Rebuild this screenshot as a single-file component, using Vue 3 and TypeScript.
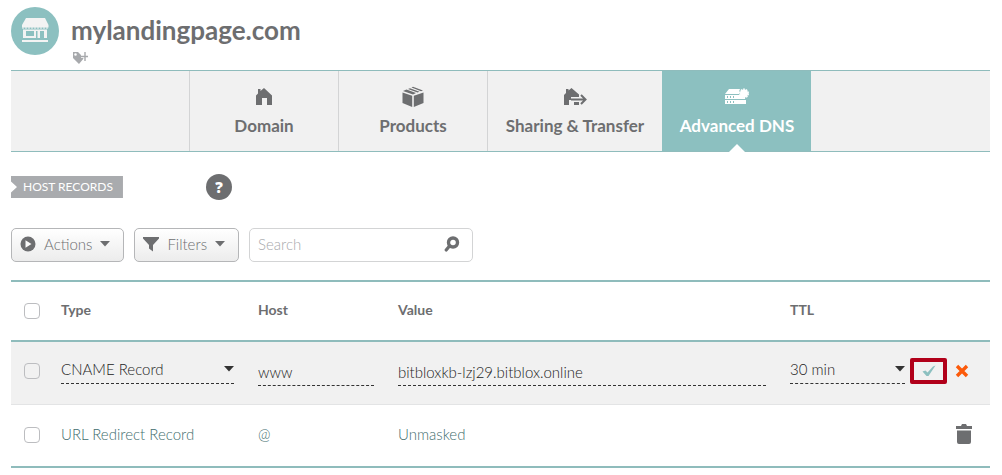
<script setup lang="ts">
import { ref } from 'vue'

interface Tab {
  id: string
  label: string
  wide?: boolean
}

const tabs: Tab[] = [
  { id: 'domain', label: 'Domain' },
  { id: 'products', label: 'Products' },
  { id: 'sharing', label: 'Sharing & Transfer', wide: true },
  { id: 'dns', label: 'Advanced DNS' },
]
const activeTab = ref('dns')
const search = ref('')
const recordType = ref('CNAME Record')
const host = ref('www')
const value = ref('bitbloxkb-lzj29.bitblox.online')
const ttl = ref('30 min')
</script>

<template>
  <main class="page">
    <header class="head">
      <svg class="logo" viewBox="0 0 48 48" aria-hidden="true">
        <circle cx="24" cy="24" r="24" fill="#8cc0c0" />
        <path d="M15 11h19l3.500 7v2.500H11V18z" fill="#f3f3f3" />
        <path d="M11 21h26.500" stroke="#f3f3f3" stroke-width="1" stroke-dasharray="2 1" />
        <path d="M12 22.500h24V31h-3v-7h-4v7h-2.500v-7H25v7H12zm3 1.500v5h8v-5z" fill="#f3f3f3" fill-rule="evenodd" />
        <path d="M11 33h26v2H11z" fill="#f3f3f3" />
      </svg>
      <div class="identity">
        <h1>mylandingpage.com</h1>
        <button class="tag" aria-label="Add tag">
          <svg width="17" height="13" viewBox="0 0 17 13">
            <path d="M2 0h5l6 6-5 6-6-6zM4.500 1.200a1.300 1.300 0 1 0 0 2.600 1.300 1.300 0 0 0 0-2.600z" fill="#a7a9ac" fill-rule="evenodd" />
            <path d="M14 0v9M10 4.500h7" stroke="#fff" stroke-width="3" />
            <path d="M14 0v9M10 4.500h7" stroke="#a7a9ac" stroke-width="1.400" />
          </svg>
        </button>
      </div>
    </header>

    <nav class="tabs">
      <a
        v-for="tab in tabs"
        :key="tab.id"
        href="#"
        class="tab"
        :class="{ active: tab.id === activeTab, wide: tab.wide }"
        @click.prevent="activeTab = tab.id"
      >
        <svg v-if="tab.id === 'domain'" width="24" height="22" viewBox="0 0 24 22">
          <path d="M4 9.500L6 7.500V3h2.500v2L12 2l8 7.500V19h-5v-7h-5v7H4z" fill="currentColor" />
        </svg>
        <svg v-else-if="tab.id === 'products'" width="24" height="22" viewBox="0 0 24 22">
          <path d="M1.500 6.500l9.700 3.300V21l-9.700-4zM22.500 6.500l-9.700 3.300V21l9.700-4zM2 5l3.500-1.400 9.500 3.400-3 1.400zM7 3l2-.8 9.500 3.500-2 .8zM10.500 1.400L12 .700 22 4.500l-2 .700z" fill="currentColor" />
        </svg>
        <svg v-else-if="tab.id === 'sharing'" width="24" height="22" viewBox="0 0 24 22">
          <path d="M1 9l2-2V3h2.500v1.500L8.500 2l7.500 6.500V11H8v3H6v5H1zM11 16h5v3h-5z" fill="currentColor" />
          <path d="M8 13.500h14M18 9l4.500 4.500L18 18" fill="none" stroke="currentColor" stroke-width="2" />
        </svg>
        <svg v-else width="24" height="22" viewBox="0 0 24 22">
          <path d="M4 3h11a5 5 0 0 0-.5 5H0zM0 9h15.500a5 5 0 0 0 4.500 2.500V13H0zM0 14h21v4H0z" fill="currentColor" />
          <circle cx="19" cy="7.500" r="4" fill="currentColor" />
          <circle cx="19" cy="7.500" r="4.300" fill="none" stroke="currentColor" stroke-width="1.400" stroke-dasharray="1.700 1" />
          <path d="M2 11h7M2 16h7" stroke="#8cc0c0" stroke-width="2" stroke-dasharray="1 2" />
        </svg>
        <span>{{ tab.label }}</span>
      </a>
    </nav>

    <div class="section">
      <h2>HOST RECORDS</h2>
      <button class="help" aria-label="Help">?</button>
    </div>

    <div class="toolbar">
      <button class="btn">
        <svg width="16" height="16" viewBox="0 0 16 16"><circle cx="8" cy="8" r="7.500" fill="#6d6e70" /><path d="M5.500 4.200v7.600l6-3.800z" fill="#fafafa" /></svg>
        <span>Actions</span>
        <svg width="10" height="6" viewBox="0 0 10 6"><path d="M0 0h10L5 5.500z" fill="#6d6e70" /></svg>
      </button>
      <button class="btn">
        <svg width="16" height="16" viewBox="0 0 16 16"><path d="M0 1h16v1.500L10 9v6.500L6 12.500V9L0 2.500z" fill="#6d6e70" /></svg>
        <span>Filters</span>
        <svg width="10" height="6" viewBox="0 0 10 6"><path d="M0 0h10L5 5.500z" fill="#6d6e70" /></svg>
      </button>
      <div class="search" role="search">
        <input v-model="search" type="text" placeholder="Search" aria-label="Search" />
        <button aria-label="Run search">
          <svg width="16" height="16" viewBox="0 0 16 16">
            <circle cx="9" cy="6.500" r="4.500" fill="none" stroke="#6d6e70" stroke-width="3.400" />
            <path d="M5.500 10L2.200 14" stroke="#6d6e70" stroke-width="3.200" stroke-linecap="round" />
          </svg>
        </button>
      </div>
    </div>

    <table>
      <colgroup>
        <col class="c-check" /><col class="c-type" /><col class="c-host" /><col /><col class="c-ttl" /><col class="c-act" />
      </colgroup>
      <thead>
        <tr>
          <th class="pick"><input type="checkbox" aria-label="Select all records" /></th>
          <th>Type</th>
          <th>Host</th>
          <th>Value</th>
          <th>TTL</th>
          <th></th>
        </tr>
      </thead>
      <tbody>
        <tr class="editing">
          <td class="pick"><input type="checkbox" aria-label="Select CNAME record" /></td>
          <td>
            <div class="field drop">
              <select v-model="recordType" aria-label="Type">
                <option>CNAME Record</option>
                <option>URL Redirect Record</option>
              </select>
              <svg width="10" height="6" viewBox="0 0 10 6"><path d="M0 0h10L5 5.500z" fill="#333" /></svg>
            </div>
          </td>
          <td><div class="field text"><input v-model="host" type="text" aria-label="Host" /></div></td>
          <td><div class="field text"><input v-model="value" type="text" aria-label="Value" /></div></td>
          <td class="ttl">
            <div class="field drop">
              <select v-model="ttl" aria-label="TTL">
                <option>30 min</option>
                <option>60 min</option>
              </select>
              <svg width="10" height="6" viewBox="0 0 10 6"><path d="M0 0h10L5 5.500z" fill="#333" /></svg>
            </div>
          </td>
          <td class="acts">
            <div class="act-row">
              <button class="save" aria-label="Save changes">
                <svg width="14" height="12" viewBox="0 0 14 12"><path d="M.500 6.500L3.500 5.500 5.500 7.500 11 1.500 13.500.500 6.500 11H4.500z" fill="#8cc0c0" /></svg>
              </button>
              <button aria-label="Discard changes">
                <svg width="14" height="14" viewBox="0 0 14 14"><path d="M2 2l10 10M12 2L2 12" stroke="#fc5a0a" stroke-width="3.400" /></svg>
              </button>
            </div>
          </td>
        </tr>
        <tr class="saved">
          <td class="pick"><input type="checkbox" aria-label="Select URL redirect record" /></td>
          <td>URL Redirect Record</td>
          <td>@</td>
          <td>Unmasked</td>
          <td></td>
          <td class="acts">
            <div class="act-row end">
              <button aria-label="Delete record">
                <svg width="16" height="20" viewBox="0 0 16 20"><path d="M0 2h5l1-2h4l1 2h5v3H0zM1 6.500h14V18q0 2-2 2H3q-2 0-2-2z" fill="#6d6e70" /></svg>
              </button>
            </div>
          </td>
        </tr>
      </tbody>
    </table>
  </main>
</template>

<style>
body {
  margin: 0;
  background: #fff;
}
</style>

<style scoped>
* {
  box-sizing: border-box;
}
.page {
  padding: 7px 12px 0 11px;
  font: 300 15px/20px Lato, "Open Sans", sans-serif;
  color: #6d6e70;
}
button,
input,
select {
  font: inherit;
  color: inherit;
  margin: 0;
  padding: 0;
  border: 0;
  background: none;
}
svg {
  display: block;
  flex: none;
}
.head {
  display: flex;
  gap: 12px;
  height: 63px;
}
.logo {
  width: 48px;
  height: 48px;
}
.identity {
  padding-top: 8px;
}
h1 {
  margin: 0;
  font-size: 26px;
  line-height: 30px;
  font-weight: 700;
}
.tag {
  display: block;
  margin-top: 7px;
}
.tabs {
  display: flex;
  height: 82px;
  padding-left: 178px;
  background: #f1f1f1;
  border-top: 1px solid #8fbcbc;
  border-bottom: 1px solid #8fbcbc;
}
.tab {
  position: relative;
  display: flex;
  flex-direction: column;
  align-items: center;
  gap: 8px;
  width: 149px;
  padding-top: 15px;
  border-left: 1px solid #d3d4d5;
  color: #6d6e70;
  font-size: 17px;
  font-weight: 700;
  text-decoration: none;
  white-space: nowrap;
}
.tab.wide {
  width: 175px;
}
.tab.active {
  background: #8cc0c0;
  border-color: #8cc0c0;
  color: #fff;
}
.tab.active::after {
  content: "";
  position: absolute;
  bottom: -1px;
  left: 50%;
  margin-left: -8px;
  border: 8px solid transparent;
  border-top: 0;
  border-bottom-color: #fff;
}
.section {
  display: flex;
  align-items: center;
  gap: 83px;
  margin-top: 22px;
}
h2 {
  margin: 0;
  padding: 0 10px 0 12px;
  background: #a9abae;
  clip-path: polygon(0 0, 100% 0, 100% 100%, 0 100%, 0 75%, 6px 50%, 0 25%);
  color: #fff;
  font-size: 12px;
  line-height: 22px;
  font-weight: 400;
}
.help {
  width: 26px;
  height: 26px;
  border-radius: 50%;
  background: #6d6e70;
  color: #fff;
  font: 800 15px/26px "Open Sans", sans-serif;
}
.toolbar {
  display: flex;
  gap: 10px;
  margin-top: 28px;
}
.btn {
  display: flex;
  align-items: center;
  gap: 8px;
  height: 34px;
  padding: 0 13px 2px 8px;
  border: 1px solid #b5b6b8;
  border-radius: 5px;
  background: linear-gradient(#fff, #ececec);
}
.search {
  display: flex;
  align-items: center;
  width: 224px;
  height: 34px;
  padding: 0 12px 2px 8px;
  border: 1px solid #d3d4d5;
  border-radius: 5px;
}
.search input {
  flex: 1;
  min-width: 0;
  outline: 0;
}
.search input::placeholder {
  color: #a7a9ac;
  opacity: 1;
}
table {
  width: 100%;
  margin-top: 18px;
  border-collapse: separate;
  border-spacing: 0;
  table-layout: fixed;
  border-top: 2px solid #8fbcbc;
  border-bottom: 2px solid #8fbcbc;
}
.c-check {
  width: 50px;
}
.c-type {
  width: 197px;
}
.c-host {
  width: 140px;
}
.c-ttl {
  width: 120px;
}
.c-act {
  width: 80px;
}
th,
td {
  padding: 0 24px 2px 0;
  text-align: left;
  vertical-align: middle;
}
th {
  height: 60px;
  border-bottom: 2px solid #8fbcbc;
  font-size: 14px;
  font-weight: 700;
}
td {
  height: 61px;
  padding-bottom: 4px;
  white-space: nowrap;
}
.editing td {
  height: 63px;
  background: #f1f1f1;
  border-bottom: 1px solid #e3e4e5;
  color: #222;
}
.saved {
  color: #3f6e6e;
}
.saved td:nth-child(2) {
  padding-right: 0;
}
th.pick,
td.pick {
  padding: 0 0 0 13px;
}
.editing td.pick {
  padding-bottom: 4px;
}
.saved td.pick {
  padding-bottom: 2px;
}
.pick input {
  display: block;
  appearance: none;
  width: 16px;
  height: 16px;
  border: 1px solid #bcbdc0;
  border-radius: 4px;
}
.field {
  display: flex;
  align-items: center;
  border-bottom: 1px dashed #333;
}
.field input,
.field select {
  flex: 1;
  min-width: 0;
  width: 100%;
  appearance: none;
  outline: 0;
}
.drop {
  height: 25px;
  padding-bottom: 4px;
}
.text {
  height: 25px;
  margin-top: 4px;
  padding-bottom: 2px;
}
td.ttl {
  padding-right: 5px;
}
td.acts {
  padding: 0 18px 4px 0;
}
.act-row {
  display: flex;
  align-items: center;
  gap: 8px;
}
.act-row.end {
  justify-content: flex-end;
}
.save {
  display: flex;
  align-items: center;
  justify-content: center;
  width: 37px;
  height: 26px;
  border: 4px solid #b1001a;
  border-radius: 2px;
}
</style>
